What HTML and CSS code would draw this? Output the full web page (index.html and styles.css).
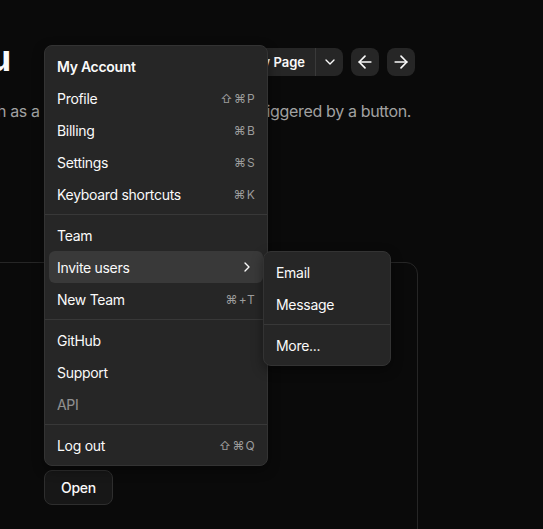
FILE: index.html
```html
<!DOCTYPE html>
<html lang="en">
<head>
    <meta charset="UTF-8">
    <meta name="viewport" content="width=device-width, initial-scale=1.0">
    <title>Dropdown Menu</title>
    <link rel="stylesheet" href="styles.css">
</head>
<body>
    <div class="content">
        <div class="head">
            <h1>Dropdown Menu</h1>
            <div class="actions">
                <div class="split">
                    <button class="copy">
                        <svg width="14" height="14" viewBox="0 0 24 24" fill="none" stroke="currentColor" stroke-width="2" stroke-linecap="round" stroke-linejoin="round"><rect x="8" y="8" width="14" height="14" rx="2"/><path d="M4 16c-1.1 0-2-.9-2-2V4c0-1.1.9-2 2-2h10c1.1 0 2 .9 2 2"/></svg>
                        Copy Page
                    </button>
                    <button class="caret">
                        <svg width="16" height="16" viewBox="0 0 24 24" fill="none" stroke="currentColor" stroke-width="2" stroke-linecap="round" stroke-linejoin="round"><path d="m6 9 6 6 6-6"/></svg>
                    </button>
                </div>
                <button class="nav">
                    <svg width="20" height="20" viewBox="0 0 24 24" fill="none" stroke="currentColor" stroke-width="2" stroke-linecap="round" stroke-linejoin="round"><path d="m12 19-7-7 7-7"/><path d="M19 12H5"/></svg>
                </button>
                <button class="nav">
                    <svg width="20" height="20" viewBox="0 0 24 24" fill="none" stroke="currentColor" stroke-width="2" stroke-linecap="round" stroke-linejoin="round"><path d="M5 12h14"/><path d="m12 5 7 7-7 7"/></svg>
                </button>
            </div>
        </div>
        <p class="lead">Displays a menu to the user — such as a set of actions or functions — triggered by a button.</p>

        <div class="preview">
            <div class="anchor">
                <div class="menu">
                    <div class="label">My Account</div>
                    <div class="item">Profile<span class="kbd">⇧⌘P</span></div>
                    <div class="item">Billing<span class="kbd">⌘B</span></div>
                    <div class="item">Settings<span class="kbd">⌘S</span></div>
                    <div class="item">Keyboard shortcuts<span class="kbd">⌘K</span></div>
                    <div class="sep"></div>
                    <div class="item">Team</div>
                    <div class="item active">Invite users
                        <svg class="chev" width="16" height="16" viewBox="0 0 24 24" fill="none" stroke="currentColor" stroke-width="2" stroke-linecap="round" stroke-linejoin="round"><path d="m9 18 6-6-6-6"/></svg>
                        <div class="submenu">
                            <div class="item">Email</div>
                            <div class="item">Message</div>
                            <div class="sep"></div>
                            <div class="item">More...</div>
                        </div>
                    </div>
                    <div class="item">New Team<span class="kbd">⌘+T</span></div>
                    <div class="sep"></div>
                    <div class="item">GitHub</div>
                    <div class="item">Support</div>
                    <div class="item disabled">API</div>
                    <div class="sep"></div>
                    <div class="item">Log out<span class="kbd">⇧⌘Q</span></div>
                </div>
                <button class="open">Open</button>
            </div>
        </div>
    </div>
</body>
</html>
```

FILE: styles.css
```css
body {
    margin: 0;
    background: #0a0a0a;
    color: #fafafa;
    font-family: Inter, "Noto Sans", "DejaVu Sans", sans-serif;
    overflow: hidden;
    height: 529px;
}

button {
    font-family: inherit;
    color: #fafafa;
    cursor: pointer;
}

.content {
    margin-left: -253px;
    width: 671px;
    padding-top: 38px;
}

.head {
    display: flex;
    align-items: flex-end;
    justify-content: space-between;
}

h1 {
    margin: 0;
    font-size: 36px;
    line-height: 40px;
    font-weight: 700;
    letter-spacing: -0.06em;
}

.actions {
    display: flex;
    gap: 8px;
    margin-bottom: 2px;
    margin-right: 3px;
}

.split {
    display: flex;
    border-radius: 8px;
    background: #262626;
    overflow: hidden;
}

.copy {
    display: flex;
    align-items: center;
    gap: 6px;
    height: 28px;
    padding: 0 10px;
    border: 0;
    background: transparent;
    font-size: 13px;
    font-weight: 600;
}

.caret {
    display: flex;
    align-items: center;
    justify-content: center;
    width: 28px;
    height: 28px;
    padding: 0;
    border: 0;
    border-left: 1px solid #3a3a3a;
    background: transparent;
}

.nav {
    display: flex;
    align-items: center;
    justify-content: center;
    width: 28px;
    height: 28px;
    padding: 0;
    border: 0;
    border-radius: 8px;
    background: #262626;
}

.lead {
    margin: 21px 0 0;
    font-size: 16px;
    line-height: 24px;
    letter-spacing: -0.35px;
    white-space: nowrap;
    color: #a1a1a1;
}

.preview {
    margin-top: 139px;
    height: 450px;
    border: 1px solid #262626;
    border-radius: 12px;
    padding: 207px 0 0 296px;
}

.anchor {
    position: relative;
    display: inline-block;
}

.open {
    height: 35px;
    padding: 0 16px;
    border: 1px solid #2e2e2e;
    border-radius: 8px;
    background: #171717;
    font-size: 14px;
    font-weight: 500;
    letter-spacing: -0.3px;
}

.menu {
    position: absolute;
    left: 0;
    bottom: calc(100% + 4px);
    width: 214px;
    padding: 4px;
    background: #262626;
    border: 1px solid #333333;
    border-radius: 8px;
    box-shadow: 0 4px 12px rgba(0, 0, 0, 0.4);
}

.label,
.item {
    display: flex;
    align-items: center;
    height: 32px;
    padding: 0 8px;
    font-size: 14px;
    letter-spacing: -0.3px;
    border-radius: 6px;
}

.label {
    font-weight: 600;
}

.item {
    position: relative;
}

.item.active {
    background: #393939;
}

.item.disabled {
    opacity: 0.5;
}

.kbd {
    margin-left: auto;
    margin-right: -1px;
    font-size: 12px;
    letter-spacing: 0.1em;
    color: #9c9c9c;
}

.chev {
    margin-left: auto;
}

.sep {
    height: 1px;
    margin: 4px -4px;
    background: #383838;
}

.submenu {
    position: absolute;
    left: 100%;
    top: 0;
    width: 118px;
    padding: 4px;
    background: #262626;
    border: 1px solid #333333;
    border-radius: 8px;
    box-shadow: 0 4px 12px rgba(0, 0, 0, 0.4);
    z-index: 2;
}
```
